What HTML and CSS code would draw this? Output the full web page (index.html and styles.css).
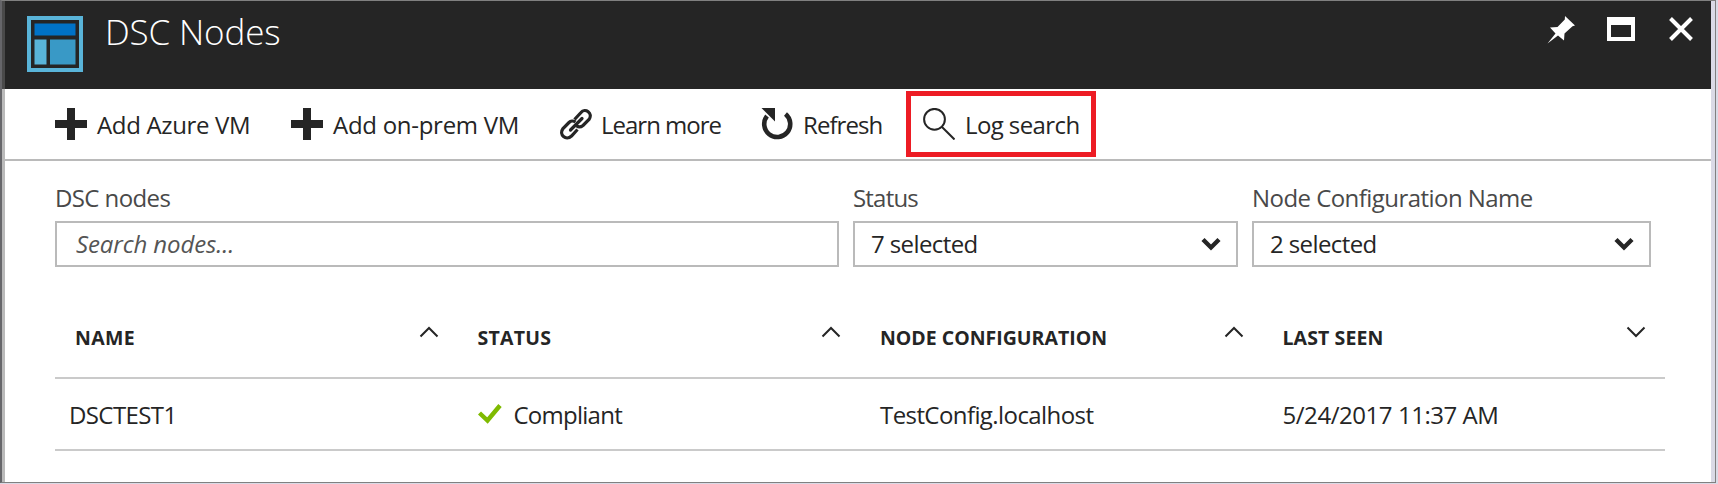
FILE: index.html
```
<!DOCTYPE html>
<html lang="en">
<head>
<meta charset="utf-8">
<title>DSC Nodes</title>
<link rel="stylesheet" href="styles.css">
</head>
<body>
<div class="frame">
  <main class="blade">
    <header class="blade-header">
      <svg class="logo" width="56" height="56" viewBox="0 0 56 56"><rect x="2" y="2" width="52" height="52" fill="none" stroke="#59b4d9" stroke-width="4"/><rect x="7.5" y="7.5" width="41" height="12" fill="#0072c6"/><rect x="7.5" y="23.500" width="12" height="25" fill="#59b4d9"/><rect x="23" y="23.500" width="25.500" height="25" fill="#3999c6"/></svg>
      <h1 class="title">DSC Nodes</h1>
      <div class="window-actions">
        <svg width="28" height="28" viewBox="0 0 28 28"><path d="M18 0 28 9.500 25.500 10.300 17.500 17.500 17 24.500 11 19.500 0.500 27.500 8.500 17.500 3 11.500 10.500 11 17.800 3.500Z" fill="#fff"/></svg>
        <svg width="28" height="24" viewBox="0 0 28 24"><path d="M0 0H28V24H0ZM4 8V20H24V8Z" fill="#fff" fill-rule="evenodd"/></svg>
        <svg width="24" height="24" viewBox="0 0 24 24"><path d="M1.500 1.500 22.500 22.500M22.500 1.500 1.500 22.500" stroke="#fff" stroke-width="4"/></svg>
      </div>
    </header>
    <nav class="toolbar">
      <button class="command"><svg width="32" height="32" viewBox="0 0 32 32"><path d="M12 0H20V12H32V20H20V32H12V20H0V12H12Z" fill="#252525"/></svg><span class="t-azure">Add Azure VM</span></button>
      <button class="command"><svg width="32" height="32" viewBox="0 0 32 32"><path d="M12 0H20V12H32V20H20V32H12V20H0V12H12Z" fill="#252525"/></svg><span class="t-prem">Add on-prem VM</span></button>
      <button class="command learn"><svg width="32" height="32" viewBox="0 0 32 32"><g fill="none" stroke="#252525" stroke-width="3.200" stroke-linecap="butt"><path d="M14.500 11.500 21 4.500C25-.5 33.500 5 29 11.500L23 17.500C20.500 19.500 18 19 16.500 17.800"/><path d="M15.500 14C13.500 12.500 10.500 13 9 14.500L3 20.500C-1.500 27 6 33 11.500 28L17.500 21.500"/><path d="M10.500 22 22 10.500" stroke-linecap="round"/></g></svg><span class="t-learn">Learn more</span></button>
      <button class="command"><svg width="32" height="32" viewBox="0 0 32 32"><path d="M24.500 6A13 13 0 1 1 6 8" fill="none" stroke="#252525" stroke-width="4.600"/><path d="M0.500 0H14V13.500Z" fill="#252525"/></svg><span class="t-refresh">Refresh</span></button>
      <button class="command highlighted"><svg width="32" height="32" viewBox="0 0 32 32"><g fill="none" stroke="#252525" stroke-width="2"><circle cx="11.500" cy="11.300" r="10.400"/><path d="M18.500 18.500 31.500 31.500"/></g></svg><span class="t-log">Log search</span></button>
    </nav>
    <section class="filters">
      <label class="field"><span class="label t-dsc">DSC nodes</span><input class="box search" type="text" placeholder="Search nodes..."></label>
      <div class="field"><span class="label t-status">Status</span><div class="box select"><span class="t-sel">7 selected</span><svg width="20" height="14" viewBox="0 0 20 14"><path d="M2 2.500 10 10.500 18 2.500" fill="none" stroke="#252525" stroke-width="4.400"/></svg></div></div>
      <div class="field"><span class="label t-config">Node Configuration Name</span><div class="box select"><span class="t-sel">2 selected</span><svg width="20" height="14" viewBox="0 0 20 14"><path d="M2 2.500 10 10.500 18 2.500" fill="none" stroke="#252525" stroke-width="4.400"/></svg></div></div>
    </section>
    <section class="grid">
      <div class="grid-row head">
        <div class="cell"><span class="t-hname">NAME</span><svg width="20" height="12" viewBox="0 0 20 12"><path d="M1.500 10.500 10 2 18.500 10.500" fill="none" stroke="#252525" stroke-width="2"/></svg></div>
        <div class="cell"><span class="t-hstatus">STATUS</span><svg width="20" height="12" viewBox="0 0 20 12"><path d="M1.500 10.500 10 2 18.500 10.500" fill="none" stroke="#252525" stroke-width="2"/></svg></div>
        <div class="cell"><span>NODE CONFIGURATION</span><svg width="20" height="12" viewBox="0 0 20 12"><path d="M1.500 10.500 10 2 18.500 10.500" fill="none" stroke="#252525" stroke-width="2"/></svg></div>
        <div class="cell"><span class="t-hlast">LAST SEEN</span><svg width="20" height="12" viewBox="0 0 20 12"><path d="M1.500 1.500 10 10 18.500 1.500" fill="none" stroke="#252525" stroke-width="2"/></svg></div>
      </div>
      <div class="grid-row body">
        <div class="cell first"><span class="t-test">DSCTEST1</span></div>
        <div class="cell"><svg width="24" height="20" viewBox="0 0 24 20"><path d="M1.500 9 9.500 16.500 22 1.500" fill="none" stroke="#7fba00" stroke-width="4.400"/></svg><span class="t-compliant">Compliant</span></div>
        <div class="cell"><span class="t-host">TestConfig.localhost</span></div>
        <div class="cell"><span class="t-date">5/24/2017 11:37 AM</span></div>
      </div>
    </section>
  </main>
</div>
</body>
</html>
```
FILE: styles.css
```
*, *::after { box-sizing: border-box; }
body {
  margin: 0;
  background: #dadae6;
  color: #252525;
  font: 24px/32px "Open Sans", "Noto Sans", sans-serif;
}
svg { display: block; flex: none; }
span, h1 { white-space: nowrap; }
.frame {
  width: 1716px;
  height: 483px;
  border: 1px solid #808080;
  border-left-width: 2px;
  border-left-color: #66666a;
  padding-right: 4px;
  background: #dadae6;
}
.blade {
  height: 481px;
  background: #fff;
  border-left: 3px solid #bababa;
}
.blade-header {
  height: 88px;
  margin-left: -3px;
  border-left: 3px solid #4a4a4a;
  background: #252525;
  display: flex;
  align-items: flex-start;
  padding: 15px 18px 0 22px;
}
.title {
  margin: -8px 0 0 22px;
  color: #fff;
  font-size: 35px;
  font-weight: 300;
  line-height: 48px;
  letter-spacing: -0.15px;
}
.window-actions {
  margin-left: auto;
  display: flex;
  gap: 32px;
}
.window-actions svg:nth-child(n+2) { margin-top: 1px; }
.window-actions svg:last-child { margin-left: 2px; }
.toolbar {
  height: 72px;
  border-bottom: 2px solid #bababa;
  padding: 19px 0 0 50px;
  display: grid;
  grid-template-columns: 236px 269px 201px 162px 200px;
}
.command {
  position: relative;
  height: 32px;
  border: 0;
  padding: 0;
  background: none;
  color: inherit;
  font: inherit;
  display: flex;
  gap: 10px;
}
.command span { padding-top: 1px; }
.t-azure { letter-spacing: -0.34px; }
.t-prem { letter-spacing: -0.28px; }
.learn { gap: 9px; }
.t-learn { letter-spacing: -1px; }
.t-refresh { letter-spacing: -0.92px; }
.t-log { letter-spacing: -0.6px; }
.highlighted::after {
  content: "";
  position: absolute;
  left: -17px;
  top: -17px;
  width: 190px;
  height: 66px;
  border: 5px solid #ed1c24;
}
.filters {
  display: grid;
  grid-template-columns: 784px 385px 399px;
  gap: 14px;
  padding: 21px 0 0 50px;
}
.field { display: flex; flex-direction: column; gap: 7px; }
.label { color: #494949; }
.t-dsc { letter-spacing: -0.6px; }
.t-status { letter-spacing: -0.8px; }
.t-config { letter-spacing: -0.55px; }
.t-sel { letter-spacing: -0.6px; }
.box {
  height: 46px;
  border: 2px solid #bababa;
  padding: 0 15px 0 16px;
  background: #fff;
  color: #252525;
}
.search {
  width: 100%;
  padding: 0 19px 2px;
  font: italic 24px/40px "Open Sans", "Noto Sans", sans-serif;
  letter-spacing: -0.1px;
}
.search::placeholder { color: #555; opacity: 1; }
.select { display: flex; align-items: center; justify-content: space-between; }
.grid { margin: 35px 0 0 50px; width: 1610px; }
.grid-row {
  display: grid;
  grid-template-columns: repeat(4, 402.5px);
  border-bottom: 2px solid #cacaca;
}
.cell { display: flex; align-items: center; padding-left: 20px; }
.head { height: 77px; font-size: 19.500px; font-weight: 700; }
.head .cell { justify-content: space-between; padding-right: 19px; }
.head .cell svg { margin-bottom: 15px; }
.head .cell span { margin-bottom: 4px; }
.t-hname { letter-spacing: 0.35px; }
.t-hstatus { letter-spacing: 0.25px; }
.t-hlast { letter-spacing: 0.1px; }
.body { height: 72px; }
.body .cell { gap: 12px; }
.body .cell span { padding-top: 2px; }
.body .first { padding-left: 14px; }
.t-test { letter-spacing: -0.6px; }
.t-compliant { letter-spacing: -0.75px; }
.t-host { letter-spacing: -0.58px; }
.t-date { letter-spacing: -0.45px; }
```
